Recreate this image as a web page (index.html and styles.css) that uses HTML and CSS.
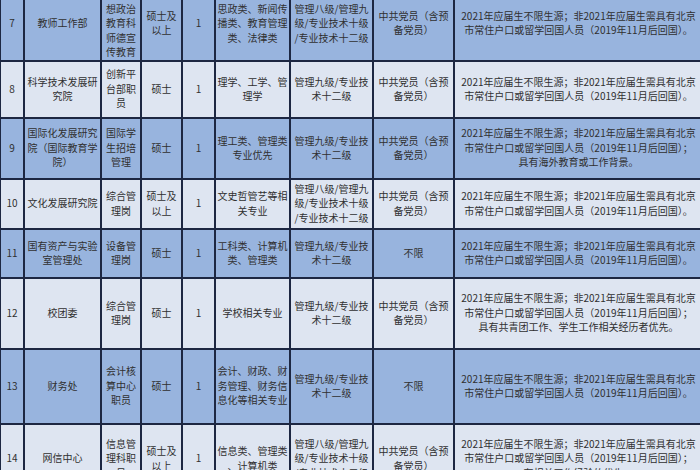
FILE: index.html
```html
<!DOCTYPE html>
<html lang="zh-CN">
<head>
<meta charset="utf-8">
<title>招聘岗位表</title>
<link rel="stylesheet" href="styles.css">
</head>
<body>
<div class="viewport">
<table class="jobs">
<colgroup>
<col class="c-no"><col class="c-dept"><col class="c-post"><col class="c-deg"><col class="c-num"><col class="c-major"><col class="c-level"><col class="c-pol"><col class="c-other">
</colgroup>
<tbody>
<tr class="row blue r7">
<td>7</td>
<td>教师工作部</td>
<td>从事思<br>想政治<br>教育科<br>师德宣<br>传教育</td>
<td>硕士及<br>以上</td>
<td>1</td>
<td>思政类、新闻传<br>播类、教育管理<br>类、法律类</td>
<td>管理八级/管理九<br>级/专业技术十级<br>/专业技术十二级</td>
<td>中共党员（含预<br>备党员）</td>
<td>2021年应届生不限生源；非2021年应届生需具有北京<br>市常住户口或留学回国人员（2019年11月后回国）。</td>
</tr>
<tr class="row light r8">
<td>8</td>
<td>科学技术发展研<br>究院</td>
<td>创新平<br>台部职<br>员</td>
<td>硕士</td>
<td>1</td>
<td>理学、工学、管<br>理学</td>
<td>管理九级/专业技<br>术十二级</td>
<td>中共党员（含预<br>备党员）</td>
<td>2021年应届生不限生源；非2021年应届生需具有北京<br>市常住户口或留学回国人员（2019年11月后回国）。</td>
</tr>
<tr class="row blue r9">
<td>9</td>
<td>国际化发展研究<br>院（国际教育学<br>院）</td>
<td>国际学<br>生招培<br>管理</td>
<td>硕士</td>
<td>1</td>
<td>理工类、管理类<br>专业优先</td>
<td>管理九级/专业技<br>术十二级</td>
<td>中共党员（含预<br>备党员）</td>
<td>2021年应届生不限生源；非2021年应届生需具有北京<br>市常住户口或留学回国人员（2019年11月后回国）；<br>具有海外教育或工作背景。</td>
</tr>
<tr class="row light r10">
<td>10</td>
<td>文化发展研究院</td>
<td>综合管<br>理岗</td>
<td>硕士及<br>以上</td>
<td>1</td>
<td>文史哲管艺等相<br>关专业</td>
<td>管理八级/管理九<br>级/专业技术十级<br>/专业技术十二级</td>
<td>中共党员（含预<br>备党员）</td>
<td>2021年应届生不限生源；非2021年应届生需具有北京<br>市常住户口或留学回国人员（2019年11月后回国）。</td>
</tr>
<tr class="row blue r11">
<td>11</td>
<td>国有资产与实验<br>室管理处</td>
<td>设备管<br>理岗</td>
<td>硕士</td>
<td>1</td>
<td>工科类、计算机<br>类、管理类</td>
<td>管理九级/专业技<br>术十二级</td>
<td>不限</td>
<td>2021年应届生不限生源；非2021年应届生需具有北京<br>市常住户口或留学回国人员（2019年11月后回国）。</td>
</tr>
<tr class="row light r12">
<td>12</td>
<td>校团委</td>
<td>综合管<br>理岗</td>
<td>硕士</td>
<td>1</td>
<td>学校相关专业</td>
<td>管理九级/专业技<br>术十二级</td>
<td>中共党员（含预<br>备党员）</td>
<td>2021年应届生不限生源；非2021年应届生需具有北京<br>市常住户口或留学回国人员（2019年11月后回国）；<br>具有共青团工作、学生工作相关经历者优先。</td>
</tr>
<tr class="row blue r13">
<td>13</td>
<td>财务处</td>
<td>会计核<br>算中心<br>职员</td>
<td>硕士</td>
<td>1</td>
<td>会计、财政、财<br>务管理、财务信<br>息化等相关专业</td>
<td>管理九级/专业技<br>术十二级</td>
<td>不限</td>
<td>2021年应届生不限生源；非2021年应届生需具有北京<br>市常住户口或留学回国人员（2019年11月后回国）。</td>
</tr>
<tr class="row light r14">
<td>14</td>
<td>网信中心</td>
<td>信息管<br>理科职<br>员</td>
<td>硕士及<br>以上</td>
<td>1</td>
<td>信息类、管理类<br>、计算机类</td>
<td>管理八级/管理九<br>级/专业技术十级<br>/专业技术十二级</td>
<td>中共党员（含预<br>备党员）</td>
<td>2021年应届生不限生源；非2021年应届生需具有北京<br>市常住户口或留学回国人员（2019年11月后回国）；<br>有相关工作经验的优先。</td>
</tr>
</tbody>
</table>
</div>
</body>
</html>
```

FILE: styles.css
```css
html, body {
  margin: 0;
  padding: 0;
  background: #ffffff;
}
.viewport {
  width: 700px;
  height: 470px;
  overflow: hidden;
}
.jobs {
  margin-top: -15px;
  margin-left: -1px;
  width: 703px;
  border-collapse: collapse;
  table-layout: fixed;
  font-family: "Noto Sans CJK SC", "Noto Sans", sans-serif;
  font-size: 10px;
  line-height: 14.5px;
  color: #303030;
}
.c-no { width: 24px; }
.c-dept { width: 77px; }
.c-post { width: 40px; }
.c-deg { width: 41px; }
.c-num { width: 33px; }
.c-major { width: 75px; }
.c-level { width: 83px; }
.c-pol { width: 81px; }
.c-other { width: 249px; }
.jobs td {
  border: 2px solid #1d2742;
  padding: 0;
  text-align: center;
  vertical-align: middle;
  white-space: nowrap;
  overflow: hidden;
}
.blue td { background: #98b4de; }
.light td { background: #dee5f1; }
.r7 td { height: 64px; }
.r8 td { height: 55px; }
.r9 td { height: 59px; }
.r10 td { height: 48px; }
.r11 td { height: 47px; }
.r12 td { height: 69px; }
.r13 td { height: 73px; }
.r14 td { height: 68px; }
```
